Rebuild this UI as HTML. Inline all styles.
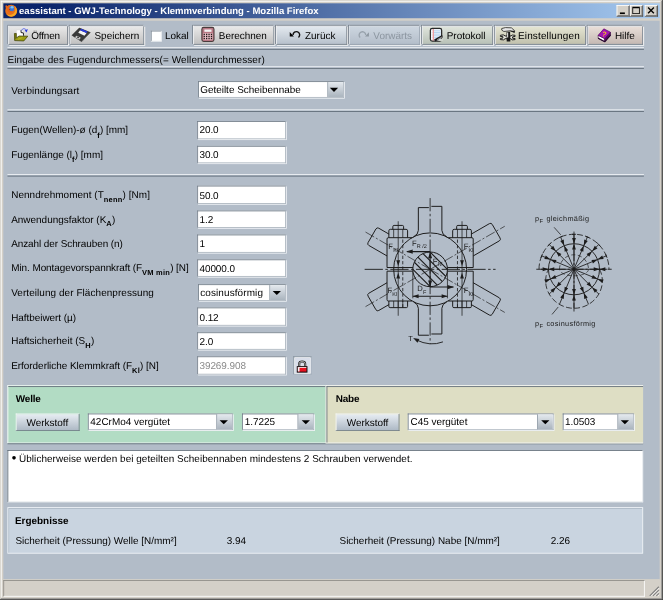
<!DOCTYPE html>
<html lang="de"><head><meta charset="utf-8"><title>eassistant - GWJ-Technology - Klemmverbindung</title>
<style>
html,body{margin:0;padding:0;width:663px;height:600px;overflow:hidden;background:#b2bcc8;}
#w{position:absolute;left:0;top:0;width:800px;height:724px;transform:scale(0.82875);transform-origin:0 0;background:#d4d0c8;font:12px/14px "Liberation Sans",Arial,sans-serif;color:#000;overflow:hidden;text-rendering:geometricPrecision;filter:blur(0.3px);}
#w *{box-sizing:border-box;}
#w div{position:absolute;white-space:nowrap;}
#w svg{position:absolute;overflow:visible;}
/* frame */
#fr-r1{left:799px;top:0;width:1px;height:724px;background:#404040;}
#fr-r2{left:798px;top:1px;width:1px;height:722px;background:#808080;}
#fr-b1{left:0;top:723px;width:800px;height:1px;background:#404040;}
#fr-b2{left:1px;top:722px;width:798px;height:1px;background:#808080;}
#fr-l{left:1px;top:1px;width:1px;height:720px;background:#fff;}
#fr-t{left:1px;top:1px;width:796px;height:1px;background:#fff;}
#title{left:4px;top:4px;width:792px;height:18px;background:linear-gradient(90deg,#0a246a 0%,#0a246a 6%,#a6caf0 100%);}
#ttext{left:19px;top:2.5px;font:bold 11.5px/14px "Liberation Sans",sans-serif;color:#fff;}
.wb{top:2px;width:16px;height:14px;background:#d4d0c8;border:1px solid;border-color:#fff #404040 #404040 #fff;box-shadow:inset -1px -1px 0 #808080;}
#client{left:4px;top:24.8px;width:792px;height:674.2px;background:#b2bcc8;}
#status{left:4px;top:699px;width:792px;height:21px;background:#d4d0c8;}
#status div{left:0;top:0.7px;width:774px;height:20.3px;border:1px solid;border-color:#8c8a84 #fff #fff #8c8a84;border-top-width:1.6px}
.tb{top:31.2px;height:23.2px;border:1px solid;border-color:#f6f6f6 #7c848c #7c848c #f6f6f6;box-shadow:-1px -1px 0 #737d88,1.2px 1.2px 0 #fafafa;background:linear-gradient(#e9e9e9,#c1c1c1);}
.tb span{position:absolute;top:3.8px;}
.sep{height:3.2px;left:9px;width:768px;border-top:1.8px solid #f2f5f8;border-bottom:1.4px solid #5c6874;}
.lbl{left:13.5px;}
.inp{left:238.3px;width:106.4px;height:21.4px;margin-top:-0.4px;letter-spacing:-0.08px;background:#fff;border:1px solid;border-color:#6c7884 #a8b2bc #a8b2bc #6c7884;box-shadow:1px 1px 0 #f2f5f8;padding:3.2px 0 0 1.4px;}
.sel{height:20.2px;background:#fff;border:1px solid;border-color:#6c7884 #a8b2bc #a8b2bc #6c7884;box-shadow:1px 1px 0 #f2f5f8;padding:2.3px 0 0 2px;}
.sel i{position:absolute;right:0;top:0;bottom:0;width:19px;background:linear-gradient(#e4e9ee,#aab4be);border-left:1px solid #8a96a2;}
.sel i:after{content:"";position:absolute;left:3.3px;top:6.8px;border:5px solid transparent;border-top:5.6px solid #000;border-bottom:none;}
.sel i.o:after{left:2.2px}
sub{font-size:9px;font-weight:bold;vertical-align:baseline;position:relative;top:4.8px;line-height:0;letter-spacing:0.3px;}
.pan{border-top:1.2px solid #fff;border-left:1.2px solid #fff;}
.lk{border:1px solid;border-color:#7c8894 #98a4b0 #98a4b0 #7c8894;background:#d9deea;box-shadow:inset 1px 1px 0 #fff,inset -1px -1px 0 #fff;}
.wk{height:21px;width:77.3px;border:1px solid;border-color:#f4f6f8 #6e7a86 #6e7a86 #f4f6f8;background:linear-gradient(#e6ecf2,#aeb9c5);text-align:center;padding-top:3px;}
</style></head><body>
<div id="w">
 <div id="fr-l"></div><div id="fr-t"></div><div id="fr-r2"></div><div id="fr-r1"></div><div id="fr-b2"></div><div id="fr-b1"></div>
 <div id="title"><div id="ttext">eassistant - GWJ-Technology - Klemmverbindung - Mozilla Firefox</div>
  <div class="wb" style="left:740px"></div><div class="wb" style="left:756px"></div><div class="wb" style="left:774px"></div>
 </div>
 <div id="client"></div>
 <div id="status"><div></div></div>
 <!-- toolbar -->
 <div class="tb" style="left:10px;width:71.5px"><span style="left:26.7px;letter-spacing:-0.2px">Öffnen</span></div>
 <div class="tb" style="left:83.5px;width:90px"><span style="left:29.5px">Speichern</span></div>
 <div style="left:182px;top:37px;width:12.5px;height:12.5px;background:#fff;border:1px solid;border-color:#7c8894 #e8ecf0 #e8ecf0 #7c8894"></div>
 <div style="left:199px;top:36.4px">Lokal</div>
 <div class="tb" style="left:233px;width:97.5px"><span style="left:30px">Berechnen</span></div>
 <div class="tb" style="left:332.5px;width:86.5px;background:linear-gradient(#e3e9ef,#b7c1cc)"><span style="left:34.5px">Zurück</span></div>
 <div class="tb" style="left:421px;width:86px;background:linear-gradient(#cdd6e0,#b4beca);border-color:#e4e9ee #98a2ae #98a2ae #e4e9ee"><span style="left:28.5px;color:#8c96a0">Vorwärts</span></div>
 <div class="tb" style="left:509px;width:85.5px;background:linear-gradient(#e0e5dd,#b8c1b7)"><span style="left:29px">Protokoll</span></div>
 <div class="tb" style="left:596.5px;width:110.5px;background:linear-gradient(#e5e5d3,#c1c1ad)"><span style="left:27.5px;letter-spacing:0.2px">Einstellungen</span></div>
 <div class="tb" style="left:709px;width:67px;background:linear-gradient(#e9dfd9,#c5b9b3)"><span style="left:32px">Hilfe</span></div>
 <div class="sep" style="top:57px"></div>
 <div style="left:9px;top:64.5px;letter-spacing:0.14px">Eingabe des Fugendurchmessers(= Wellendurchmesser)</div>
 <div class="sep" style="top:80px"></div>
 <div class="lbl" style="top:101.7px;letter-spacing:0.12px">Verbindungsart</div>
 <div class="sel" style="left:238.5px;top:98px;width:176px">Geteilte Scheibennabe<i class="o"></i></div>
 <div class="sep" style="top:131.5px"></div>
 <div class="lbl" style="top:150.0px;letter-spacing:0.0px">Fugen(Wellen)-ø (d<sub>f</sub>) [mm]</div>
 <div class="inp" style="top:146.6px">20.0</div>
 <div class="lbl" style="top:179.5px;letter-spacing:0.0px">Fugenlänge (l<sub>f</sub>) [mm]</div>
 <div class="inp" style="top:176.3px">30.0</div>
 <div class="sep" style="top:210px"></div>
 <div class="lbl" style="top:228.0px;letter-spacing:0.06px">Nenndrehmoment (T<sub>nenn</sub>) [Nm]</div>
 <div class="inp" style="top:224.8px">50.0</div>
 <div class="lbl" style="top:257.5px;letter-spacing:0.0px">Anwendungsfaktor (K<sub>A</sub>)</div>
 <div class="inp" style="top:254.2px">1.2</div>
 <div class="lbl" style="top:286.9px;letter-spacing:-0.09px">Anzahl der Schrauben (n)</div>
 <div class="inp" style="top:283.6px">1</div>
 <div class="lbl" style="top:316.3px;letter-spacing:-0.075px">Min. Montagevorspannkraft (F<sub>VM min</sub>) [N]</div>
 <div class="inp" style="top:313px">40000.0</div>
 <div class="lbl" style="top:346.1px;letter-spacing:0.09px">Verteilung der Flächenpressung</div>
 <div class="sel" style="left:238.5px;top:342.8px;width:106px;letter-spacing:0.15px">cosinusförmig<i></i></div>
 <div class="lbl" style="top:375.6px;letter-spacing:-0.05px">Haftbeiwert (µ)</div>
 <div class="inp" style="top:371.8px">0.12</div>
 <div class="lbl" style="top:404.4px;letter-spacing:0.04px">Haftsicherheit (S<sub>H</sub>)</div>
 <div class="inp" style="top:401.2px">2.0</div>
 <div class="lbl" style="top:433.8px;letter-spacing:-0.03px">Erforderliche Klemmkraft (F<sub>Kl</sub>) [N]</div>
 <div class="inp" style="top:430.6px;color:#8a8a8a">39269.908</div>
 <div class="lk" style="left:354.2px;top:430.1px;width:21.5px;height:21.8px"></div>
 <svg style="left:0;top:0" width="800" height="724" viewBox="0 0 800 724"><g transform="translate(519,325)" fill="none" stroke="#1c1c1c" stroke-width="1.2" stroke-linecap="butt">
<path d="M40.64 -9.61L83.51 -34.36Q85.67 -35.61 84.42 -37.77L74.92 -54.23Q73.67 -56.39 71.51 -55.14L28.64 -30.39"/>
<path d="M28.64 30.39L71.51 55.14Q73.67 56.39 74.92 54.23L84.42 37.77Q85.67 35.61 83.51 34.36L40.64 9.61"/>
<path d="M-28.64 -30.39L-61.98 -49.64Q-64.15 -50.89 -65.4 -48.73L-74.9 -32.27Q-76.15 -30.11 -73.98 -28.86L-40.64 -9.61"/>
<path d="M-40.64 9.61L-73.98 28.86Q-76.15 30.11 -74.9 32.27L-65.4 48.73Q-64.15 50.89 -61.98 49.64L-28.64 30.39"/>
<rect x="-52" y="-38.2" width="104" height="76.4" fill="#b2bcc8" stroke="none"/>
<rect x="-49.5" y="-48.3" width="23" height="11" fill="#b2bcc8" stroke="none"/>
<rect x="26.5" y="-48.3" width="23" height="11" fill="#b2bcc8" stroke="none"/>
<rect x="-49.5" y="38" width="23" height="8.5" fill="#b2bcc8" stroke="none"/>
<rect x="26.5" y="38" width="23" height="8.5" fill="#b2bcc8" stroke="none"/>
<path d="M-14.2 -74.5L-14.2 -47Q-14.2 -42 -20.2 -39.09"/>
<path d="M14.2 -76L14.2 -47Q14.2 -42 20.2 -39.09"/>
<path d="M-14.2 79.5L-14.2 47Q-14.2 42 -20.2 39.09"/>
<path d="M14.2 78L14.2 47Q14.2 42 20.2 39.09"/>
<path d="M-14.2 -74.5L-1.5 -74.5M1.5 -76L14.2 -76"/>
<path d="M-14.2 79.5L-1.5 79.5M1.5 78L14.2 78"/>
<circle r="44.0"/>
<clipPath id="sc"><circle r="20.9"/></clipPath>
<circle r="20.9" fill="#b2bcc8"/>
<path d="M-56 -4L4 56M-50.8 -9.2L9.2 50.8M-45.6 -14.4L14.4 45.6M-40.4 -19.6L19.6 40.4M-35.2 -24.8L24.8 35.2M-30 -30L30 30M-24.8 -35.2L35.2 24.8M-19.6 -40.4L40.4 19.6M-14.4 -45.6L45.6 14.4M-9.2 -50.8L50.8 9.2M-4 -56L56 4" clip-path="url(#sc)" stroke-width="1.35"/>
<path d="M-21.83 -38.2L-50.5 -38.2Q-52 -38.2 -52 -36.5L-52 -2.2L-20.69 -2.2"/>
<path d="M-21.83 38.2L-50.5 38.2Q-52 38.2 -52 36.5L-52 2.2L-20.69 2.2"/>
<path d="M-49.8 -38.2L-49.8 -46.5Q-49.8 -48.3 -48 -48.3L-29 -48.3Q-27.2 -48.3 -27.2 -46.5L-27.2 -38.2"/>
<path d="M-45 -48.3L-45 -51.5Q-45 -53 -43.5 -53L-33.5 -53Q-32 -53 -32 -51.5L-32 -48.3"/>
<path d="M-44 -48.3L-44 -38.2M-33 -48.3L-33 -38.2" stroke-width="0.9"/>
<path d="M-49.8 38.2L-49.8 44.7Q-49.8 46.2 -48.3 46.2L-28.7 46.2Q-27.2 46.2 -27.2 44.7L-27.2 38.2"/>
<path d="M-44 46.2L-44 38.2M-33 46.2L-33 38.2M-38.5 46.2L-38.5 38.2" stroke-width="0.9"/>
<path d="M-38.5 -58L-38.5 56" stroke-width="0.9"/>
<path d="M-33 -36L-33 46" stroke-dasharray="4 2.5" stroke-width="1"/>
<path d="M-38.5 -4L-40.8 -11L-36.2 -11ZM-38.5 4L-40.8 11L-36.2 11Z" fill="#1c1c1c" stroke="none"/>
<path d="M21.83 -38.2L50.5 -38.2Q52 -38.2 52 -36.5L52 -2.2L20.69 -2.2"/>
<path d="M21.83 38.2L50.5 38.2Q52 38.2 52 36.5L52 2.2L20.69 2.2"/>
<path d="M27.2 -38.2L27.2 -46.5Q27.2 -48.3 29 -48.3L48 -48.3Q49.8 -48.3 49.8 -46.5L49.8 -38.2"/>
<path d="M32 -48.3L32 -51.5Q32 -53 33.5 -53L43.5 -53Q45 -53 45 -51.5L45 -48.3"/>
<path d="M33 -48.3L33 -38.2M44 -48.3L44 -38.2" stroke-width="0.9"/>
<path d="M27.2 38.2L27.2 44.7Q27.2 46.2 28.7 46.2L48.3 46.2Q49.8 46.2 49.8 44.7L49.8 38.2"/>
<path d="M33 46.2L33 38.2M44 46.2L44 38.2M38.5 46.2L38.5 38.2" stroke-width="0.9"/>
<path d="M38.5 -58L38.5 56" stroke-width="0.9"/>
<path d="M33 -36L33 46" stroke-dasharray="4 2.5" stroke-width="1"/>
<path d="M38.5 -4L36.2 -11L40.8 -11ZM38.5 4L36.2 11L40.8 11Z" fill="#1c1c1c" stroke="none"/>
<path d="M-79 0L79 0" stroke-dasharray="22 3 3 3" stroke-width="1.1"/>
<path d="M0 -86L0 90" stroke-dasharray="16 3 3 3" stroke-width="1"/>
<path d="M0 0L90.07 -52" stroke-dasharray="12 2.5 2.5 2.5" stroke-width="0.8"/>
<path d="M0 0L90.07 52" stroke-dasharray="12 2.5 2.5 2.5" stroke-width="0.8"/>
<path d="M0 0L-79.67 -46" stroke-dasharray="12 2.5 2.5 2.5" stroke-width="0.8"/>
<path d="M0 0L-79.67 46" stroke-dasharray="12 2.5 2.5 2.5" stroke-width="0.8"/>
<path d="M0 -21.4L-28 -21.4M0 21.4L28 21.4M0 -20L0 20" stroke-width="1.3"/>
<path d="M-29 -21.4L-21 -24L-21 -18.8ZM29 21.4L21 24L21 18.8ZM0 -21L-2.4 -13.5L2.4 -13.5ZM0 21L-2.4 13.5L2.4 13.5Z" fill="#1c1c1c" stroke="none"/>
<path d="M-20.9 3L-20.9 35M20.9 3L20.9 35" stroke-width="0.9"/>
<path d="M-20.9 32.5L20.9 32.5" stroke-width="1.2"/>
<path d="M-20.9 32.5L-13.899999999999999 30.2L-13.899999999999999 34.8ZM20.9 32.5L13.899999999999999 30.2L13.899999999999999 34.8Z" fill="#1c1c1c" stroke="none"/>
<path d="M-17 85Q0 93.5 15.5 87.5" stroke-width="1.1"/>
<path d="M-20.5 82.8L-13 84L-15.2 88.6Z" fill="#1c1c1c" stroke="none"/>
<g fill="#1c1c1c" stroke="none" font-family="Liberation Sans, Arial, sans-serif" font-size="9.2" stroke="#1c1c1c" stroke-width="0.35">
<text x="-22" y="-28.5">F<tspan dx="0.3" dy="3" font-size="6.6">R /2</tspan></text>
<text x="3.3" y="-7">F<tspan dx="0.3" dy="3" font-size="6.6">N</tspan></text>
<text x="-50.5" y="-24.5">F<tspan dx="0.3" dy="3" font-size="6.6">Kl</tspan></text>
<text x="-51.5" y="29">F<tspan dx="0.3" dy="3" font-size="6.6">Kl</tspan></text>
<text x="40.5" y="-24.5">F<tspan dx="0.3" dy="3" font-size="6.6">Kl</tspan></text>
<text x="40.5" y="29">F<tspan dx="0.3" dy="3" font-size="6.6">Kl</tspan></text>
<text x="-15.5" y="26.5">D<tspan dx="0.3" dy="3" font-size="6.6">F</tspan></text>
<text x="-26.5" y="86.5" font-size="9">T</text>
</g>
</g>
<g transform="translate(692.6,324.9)" fill="none" stroke="#1c1c1c" stroke-width="1" >
<circle r="30.8" stroke-width="1.1"/>
<path d="M-42.2 0A42.2 42.2 0 0 1 42.2 0" stroke-dasharray="7 3"/>
<path d="M-17.5 0A17.5 17.5 0 0 1 17.5 0" stroke-dasharray="5 3" stroke-width="0.8"/>
<path d="M30.8 0L32.1 2.81L33.12 5.84L33.83 9.06L34.18 12.44L34.16 15.93L33.73 19.47L32.89 23.03L31.62 26.53L29.93 29.93L27.82 33.16L25.32 36.17L22.46 38.9L19.26 41.3L15.77 43.34L12.05 44.96L8.14 46.14L4.1 46.86L0 47.1L-4.1 46.86L-8.14 46.14L-12.05 44.96L-15.77 43.34L-19.26 41.3L-22.46 38.9L-25.32 36.17L-27.82 33.16L-29.93 29.93L-31.62 26.53L-32.89 23.03L-33.73 19.47L-34.16 15.93L-34.18 12.44L-33.83 9.06L-33.12 5.84L-32.1 2.81L-30.8 0" stroke-dasharray="7 3"/>
<path d="M17.5 0L17.43 0.69L17.23 1.37L16.9 2.04L16.44 2.69L15.86 3.33L15.16 3.94L14.34 4.52L13.41 5.06L12.37 5.57L11.25 6.03L10.04 6.45L8.75 6.82L7.4 7.14L5.99 7.4L4.53 7.61L3.04 7.76L1.53 7.85L0 7.88L-1.53 7.85L-3.04 7.76L-4.53 7.61L-5.99 7.4L-7.4 7.14L-8.75 6.82L-10.04 6.45L-11.25 6.03L-12.37 5.57L-13.41 5.06L-14.34 4.52L-15.16 3.94L-15.86 3.33L-16.44 2.69L-16.9 2.04L-17.23 1.37L-17.43 0.69L-17.5 0" stroke-dasharray="5 3" stroke-width="0.8"/>
<path d="M-45.5 0L45.5 0" stroke-dasharray="14 2.5 2.5 2.5" stroke-width="1.1"/>
<path d="M0 -45.5L0 51" stroke-dasharray="14 2.5 2.5 2.5" stroke-width="1"/>
<path d="M0 0L39.8 -0M0 0L38.99 -16.15M38.03 -18.46L39.94 -13.84M0 0L29.84 -29.84M28.07 -31.61L31.61 -28.07M0 0L16.15 -38.99M13.84 -39.94L18.46 -38.03M0 0L0 -42.2M-2.5 -42.2L2.5 -42.2M0 0L-16.15 -38.99M-18.46 -38.03L-13.84 -39.94M0 0L-29.84 -29.84M-31.61 -28.07L-28.07 -31.61M0 0L-38.99 -16.15M-39.94 -13.84L-38.03 -18.46M0 0L-39.8 -0M0 0L-34.22 14.17M0 0L-29.93 29.93M0 0L-17.55 42.37M0 0L-0 47.1M0 0L17.55 42.37M0 0L29.93 29.93M0 0L34.22 14.17" stroke-width="1.05"/>
<path d="M30.8 -0L37.8 2.3L37.8 -2.3ZM30.8 -0L23.8 2.3L23.8 -2.3ZM28.46 -11.79L35.8 -12.34L34.04 -16.59ZM28.46 -11.79L22.87 -6.98L21.11 -11.23ZM21.78 -21.78L28.35 -25.1L25.1 -28.35ZM21.78 -21.78L18.46 -15.2L15.2 -18.46ZM11.79 -28.46L16.59 -34.04L12.34 -35.8ZM11.79 -28.46L11.23 -21.11L6.98 -22.87ZM0 -30.8L2.3 -37.8L-2.3 -37.8ZM0 -30.8L2.3 -23.8L-2.3 -23.8ZM-11.79 -28.46L-12.34 -35.8L-16.59 -34.04ZM-11.79 -28.46L-6.98 -22.87L-11.23 -21.11ZM-21.78 -21.78L-25.1 -28.35L-28.35 -25.1ZM-21.78 -21.78L-15.2 -18.46L-18.46 -15.2ZM-28.46 -11.79L-34.04 -16.59L-35.8 -12.34ZM-28.46 -11.79L-21.11 -11.23L-22.87 -6.98ZM-30.8 -0L-37.8 -2.3L-37.8 2.3ZM-30.8 -0L-23.8 -2.3L-23.8 2.3ZM-28.46 11.79L-35.8 12.34L-34.04 16.59ZM-28.46 11.79L-22.87 6.98L-21.11 11.23ZM-21.78 21.78L-28.35 25.1L-25.1 28.35ZM-21.78 21.78L-18.46 15.2L-15.2 18.46ZM-11.79 28.46L-16.59 34.04L-12.34 35.8ZM-11.79 28.46L-11.23 21.11L-6.98 22.87ZM-0 30.8L-2.3 37.8L2.3 37.8ZM-0 30.8L-2.3 23.8L2.3 23.8ZM11.79 28.46L12.34 35.8L16.59 34.04ZM11.79 28.46L6.98 22.87L11.23 21.11ZM21.78 21.78L25.1 28.35L28.35 25.1ZM21.78 21.78L15.2 18.46L18.46 15.2ZM28.46 11.79L34.04 16.59L35.8 12.34ZM28.46 11.79L21.11 11.23L22.87 6.98Z" fill="#1c1c1c" stroke="none"/>
<path d="M-24 -50.6L-16 -41.6M-19 45.5L-26.5 54.5" stroke-width="0.9"/>
<g fill="#1c1c1c" stroke="none" font-family="Liberation Sans, Arial, sans-serif" font-size="8.8" letter-spacing="0.4" stroke="#1c1c1c" stroke-width="0.4">
<text x="-47" y="-58">p<tspan dy="2.5" font-size="7">F</tspan><tspan dy="-2.5" dx="3.7">gleichmäßig</tspan></text>
<text x="-47" y="68.5">p<tspan dy="2.5" font-size="7">F</tspan><tspan dy="-2.5" dx="3.7">cosinusförmig</tspan></text>
</g>
</g></svg>
 <svg style="left:0;top:0" width="800" height="724" viewBox="0 0 800 724"><g><circle cx="13.5" cy="13" r="7.2" fill="#e8701a"/><ellipse cx="14.2" cy="10.4" rx="3" ry="3.6" fill="#3a78d8"/><ellipse cx="14.6" cy="8.8" rx="1.8" ry="1.6" fill="#7cc4f4"/><path d="M6.4 8.5L7.2 5.6L8.8 7.4L10.6 6.2L11.2 8.6Q9 11 11.6 13Q13.6 14.2 15.6 12.6Q14.8 15.4 12.2 15.2Q9 14.6 8.6 11.4Z" fill="#e86414"/><path d="M17.6 7.2Q21.4 10.4 20.2 15Q18.6 19.6 13.6 20.2Q9.4 20 7.4 16.6Q10.8 19 14.6 17.6Q18.8 15.4 18.6 10.6Q18.4 8.6 17.6 7.2Z" fill="#f8a820"/><path d="M10.4 11.2Q11.6 10.6 12.6 11.4L11.4 12.4Z" fill="#c02810"/></g>
<g transform="translate(17,33.5)" stroke-linejoin="round"><path d="M2.8 2.7L9.2 2.7L11.4 5.4L11.4 10.2L6 10.2L2.8 12.4Z" fill="#fff" stroke="#d0d0d0" stroke-width="0.5"/><path d="M8.4 2.9L8.4 5.8L11.2 6.2L11.4 9.6" fill="none" stroke="#222" stroke-width="1.2"/><path d="M0.4 6.9L2.7 6.9L2.7 12.3L6 10L16.5 10.2L11.7 15.9L0.7 15.5Z" fill="#9c9e12" stroke="#3c3e08" stroke-width="0.9"/><path d="M0.9 7.4L2.2 7.4L2.2 12.8L0.9 14.8Z" fill="#6c6e0c"/><path d="M4.5 14L10 11.8" stroke="#c0c238" stroke-width="0.8" fill="none"/><path d="M8.8 3.2Q11.5 -1 15 3" fill="none" stroke="#4858e8" stroke-width="1"/><path d="M16.6 1.6L15.2 5.6L12.8 3.4Z" fill="#2838e0"/></g>
<g><path d="M95.7 33.9L108.8 39.3L98.5 50.2L87 42.6Z" fill="#3a3a3a" stroke="#222" stroke-width="0.8" stroke-linejoin="round"/><path d="M96.6 36.6L104.4 39.9L102 43L94.4 39.6Z" fill="#f4f4f4"/><path d="M97.9 34.8L105.6 38L104.4 39.9L96.6 36.6Z" fill="#2838e0"/><path d="M92.3 43L97.6 45.6L95.5 48L90.3 44.8Z" fill="#c8c8c8"/><path d="M93.3 44.6L95 45.5" stroke="#222" stroke-width="1.3"/><path d="M98.5 50.2L108.8 39.3" stroke="#888" stroke-width="0.7"/></g>
<g><rect x="243.6" y="33" width="14.6" height="17" rx="2.2" fill="#b87884" stroke="#4a3c3c" stroke-width="1.3"/><rect x="246.6" y="35.6" width="8.6" height="2.8" fill="#f2f2f2"/><rect x="245.3" y="40" width="11.2" height="8" fill="#e6bcc4"/><rect x="245.70000000000002" y="40.7" width="1.5" height="1.6" fill="#1a1414"/><rect x="248.60000000000002" y="40.7" width="1.5" height="1.6" fill="#1a1414"/><rect x="251.5" y="40.7" width="1.5" height="1.6" fill="#1a1414"/><rect x="254.4" y="40.7" width="1.5" height="1.6" fill="#1a1414"/><rect x="245.70000000000002" y="43.2" width="1.5" height="1.6" fill="#1a1414"/><rect x="248.60000000000002" y="43.2" width="1.5" height="1.6" fill="#1a1414"/><rect x="251.5" y="43.2" width="1.5" height="1.6" fill="#1a1414"/><rect x="254.4" y="43.2" width="1.5" height="1.6" fill="#1a1414"/><rect x="245.70000000000002" y="45.7" width="1.5" height="1.6" fill="#1a1414"/><rect x="248.60000000000002" y="45.7" width="1.5" height="1.6" fill="#1a1414"/><rect x="251.5" y="45.7" width="1.5" height="1.6" fill="#1a1414"/><rect x="254.4" y="45.7" width="1.5" height="1.6" fill="#1a1414"/></g>
<g><path d="M349.6 38.6L349.6 44L354.6 44Z" fill="#000"/><path d="M353.6 42.3A4 4 0 1 1 360.2 45.2" fill="none" stroke="#111" stroke-width="1.7"/></g>
<g><path d="M445.2 38.9L445.2 44L440.4 44Z" fill="#8e98a2"/><path d="M441.3 42.2A4 4 0 1 0 434.6 45.3" fill="none" stroke="#98a2ac" stroke-width="1.6"/></g>
<g><rect x="519.3" y="34.3" width="13.6" height="15.3" rx="2.2" fill="#eaf2fa" stroke="#2a2a2a" stroke-width="1.5"/><path d="M523.5 37.2L531.5 37.2" stroke="#9cc4ec" stroke-width="0.8"/><path d="M523.5 39.2L531.5 39.2" stroke="#9cc4ec" stroke-width="0.8"/><path d="M523.5 41.2L531.5 41.2" stroke="#9cc4ec" stroke-width="0.8"/><path d="M523.5 43.2L531.5 43.2" stroke="#9cc4ec" stroke-width="0.8"/><path d="M523.5 45.2L531.5 45.2" stroke="#9cc4ec" stroke-width="0.8"/><path d="M523.5 47.2L531.5 47.2" stroke="#9cc4ec" stroke-width="0.8"/><path d="M522.7 35L522.7 49" stroke="#f06060" stroke-width="1"/><rect x="520.5" y="37" width="1.2" height="1.4" fill="#fff"/><rect x="520.5" y="40" width="1.2" height="1.4" fill="#fff"/><rect x="520.5" y="43" width="1.2" height="1.4" fill="#fff"/><rect x="520.5" y="46" width="1.2" height="1.4" fill="#fff"/><path d="M524.5 48.8L534 43.4" stroke="#1a1a1a" stroke-width="2.6"/><path d="M527.5 47.9L534 44.2" stroke="#d8d8d8" stroke-width="0.8"/><path d="M528 49.6L534.6 45.6L534.6 49.6Z" fill="#cfd4cc"/></g>
<g stroke-linejoin="round"><path d="M603.8 42.6L607.3 42.1L609.5 43.4L616.6 43.4L618.2 42.3L621.5 42.6L621.5 44.0L618.5 44.4L618.5 46.2L621.5 46.5L621.5 47.8L618.0 48.1L616.3 46.7L609.5 46.7L607.6 48.1L603.8 47.8L603.8 46.4L606.8 46.0L606.8 44.2L603.8 44.0Z" fill="#e8e8e0" stroke="#1c1c1c" stroke-width="1.2"/><path d="M611.2 38.2L615.5 38.2L615.8 50.0L611.4 50.0Z" fill="#181818"/><path d="M611.8 39.1L613.2 39.1L613.2 45.3L611.8 45.3Z" fill="#d8d8d8"/><path d="M605.4 34.4L610.0 33.3L617.1 33.6L621.0 37.1L620.7 39.3L616.1 37.1L607.9 38.0L605.4 36.3Z" fill="#e6e6e6" stroke="#2a2a2a" stroke-width="1"/><path d="M615.5 37.1L620.7 37.1L620.9 39.3L616.1 38.0Z" fill="#1c1c1c"/></g>
<g stroke-linejoin="round"><path d="M721.8 42.6L729.7 46.6L729.7 50.2L721.8 46Z" fill="#fff" stroke="#40104a" stroke-width="0.8"/><path d="M729.7 46.6L736.5 38.8L736.7 42.2L729.7 50.2Z" fill="#5a0a68" stroke="#300838" stroke-width="0.8"/><path d="M728.6 34.8L736.5 38.8L729.7 46.6L721.8 42.6Z" fill="#a414b4" stroke="#500a5c" stroke-width="0.8"/><path d="M721.6 46.2L729.7 50.4L736.8 42.4" fill="none" stroke="#28062e" stroke-width="1.3"/><text x="726.6" y="44.2" font-family="Liberation Sans, sans-serif" font-weight="bold" font-size="8.5" fill="#f4c020" transform="rotate(18 729 41)">?</text></g>
<g><path d="M361 442.4V439Q361 436.2 364.6 436.2Q368.2 436.2 368.2 439V442.4" fill="none" stroke="#222" stroke-width="2.6"/><path d="M361 442.4V439Q361 436.2 364.6 436.2Q368.2 436.2 368.2 439V442.4" fill="none" stroke="#d4d4d4" stroke-width="0.9"/><rect x="358.7" y="442.4" width="11.7" height="6.6" fill="#e81020" stroke="#101010" stroke-width="1.2"/><path d="M359.4 443.4H369.6" stroke="#fff" stroke-width="1"/><path d="M360.4 443.4V448.2" stroke="#f4f4f4" stroke-width="2"/></g>
<g fill="#000"><rect x="748" y="15" width="6" height="2"/><path d="M763 8H772V17H763ZM764 10V16H771V10Z" fill-rule="evenodd"/><path d="M782 9L789 16M789 9L782 16" stroke="#000" stroke-width="1.6" fill="none"/></g>
<g><path d="M784 719L795 708" stroke="#808080" stroke-width="1.4"/><path d="M785.5 719.5L795.5 709.5" stroke="#fff" stroke-width="0.9"/><path d="M788 719L795 712" stroke="#808080" stroke-width="1.4"/><path d="M789.5 719.5L795.5 713.5" stroke="#fff" stroke-width="0.9"/><path d="M792 719L795 716" stroke="#808080" stroke-width="1.4"/><path d="M793.5 719.5L795.5 717.5" stroke="#fff" stroke-width="0.9"/></g></svg>
 <!-- Welle -->
 <div class="pan" style="left:9px;top:464.5px;width:384px;height:70.3px;background:#b2dcc4;border-bottom:1px solid #f4f6f8"></div>
 <div style="left:10px;top:466px;width:383px;height:1px;background:#5c6874"></div>
 <div style="left:9px;top:535.2px;width:767px;height:1.1px;background:#5c6874"></div>
 <div style="left:19px;top:474px;font-weight:bold;letter-spacing:-0.2px">Welle</div>
 <div class="wk" style="left:18.5px;top:499.3px">Werkstoff</div>
 <div class="sel" style="left:106px;top:499.2px;width:175px">42CrMo4 vergütet<i></i></div>
 <div class="sel" style="left:292.3px;top:499.2px;width:87px">1.7225<i></i></div>
 <!-- Nabe -->
 <div class="pan" style="left:392.5px;top:464.5px;width:383.5px;height:70.3px;background:#dedec4;border-bottom:1px solid #f4f6f8"></div>
 <div style="left:393.7px;top:466px;width:1.2px;height:68.3px;background:#5c6874"></div>
 <div style="left:394px;top:466px;width:382px;height:1px;background:#5c6874"></div>
 <div style="left:405px;top:474px;font-weight:bold;letter-spacing:-0.2px">Nabe</div>
 <div class="wk" style="left:404.8px;top:499.3px">Werkstoff</div>
 <div class="sel" style="left:492.3px;top:499.2px;width:176px">C45 vergütet<i></i></div>
 <div class="sel" style="left:678.7px;top:499.2px;width:86.5px">1.0503<i></i></div>
 <!-- messages -->
 <div style="left:9px;top:543.3px;width:767px;height:63px;background:#fff;border:1px solid;border-color:#5c6874 #e4e8ec #e4e8ec #5c6874"></div>
 <div style="left:14px;top:545.8px;font-size:10px">●</div>
 <div style="left:23px;top:546px;letter-spacing:0.055px">Üblicherweise werden bei geteilten Scheibennaben mindestens 2 Schrauben verwendet.</div>
 <!-- results -->
 <div style="left:9px;top:611.5px;width:767px;height:56.5px;background:#c9d4e0;border:1px solid #eef2f6;box-shadow:inset 1px 1px 0 #a8b4c0"></div>
 <div style="left:18px;top:621px;font-weight:bold">Ergebnisse</div>
 <div style="left:18.7px;top:645px">Sicherheit (Pressung) Welle [N/mm²]</div>
 <div style="left:273.6px;top:645px">3.94</div>
 <div style="left:409.7px;top:645px">Sicherheit (Pressung) Nabe [N/mm²]</div>
 <div style="left:664.6px;top:645px">2.26</div>
</div>
</body></html>
